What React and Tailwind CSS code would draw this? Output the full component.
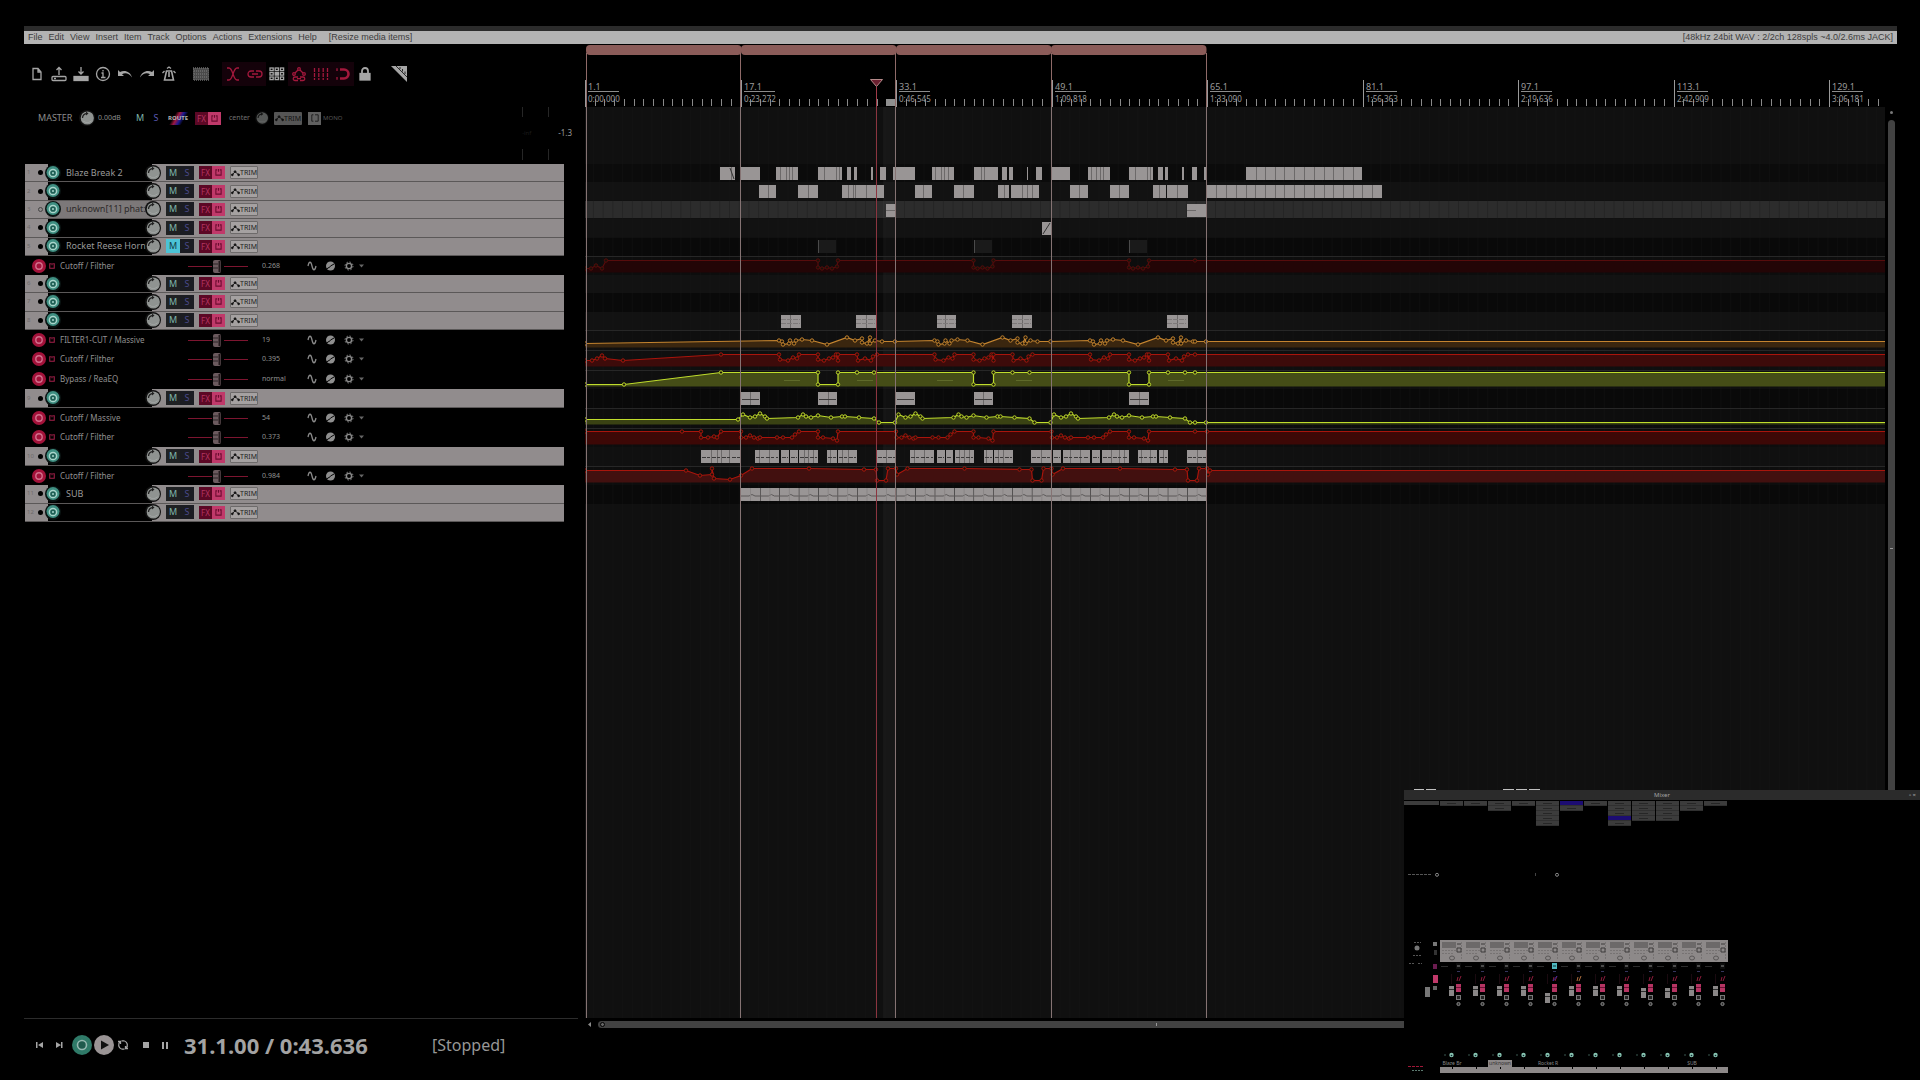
import React from 'react';

const SANS = "font-['Noto_Sans','Open_Sans',sans-serif]";

// Pixel position of bar 1 and the top of the lanes, 16 bars per section
const ORIGIN_X = 585;
const RULER_Y = 44;
const LANES_Y = 107;
const SECTION = 155.5;

const MENUS = ['File', 'Edit', 'View', 'Insert', 'Item', 'Track', 'Options', 'Actions', 'Extensions', 'Help'];

const MARKS = [
  ['1.1', '0:00,000'],
  ['17.1', '0:23,272'],
  ['33.1', '0:46,545'],
  ['49.1', '1:09,818'],
  ['65.1', '1:33,090'],
  ['81.1', '1:56,363'],
  ['97.1', '2:19,636'],
  ['113.1', '2:42,909'],
  ['129.1', '3:06,181'],
];

const GROUPS = [
  {
    height: 'h-[92px]',
    rows: [
      { name: 'Blaze Break 2' },
      { name: '' },
      { name: 'unknown[11] phat:', selected: true },
      { name: '' },
      { name: 'Rocket Reese Horn', muted: true },
    ],
  },
  { height: 'h-[19px]', rows: [{ env: 'Cutoff / Filther', value: '0.268' }] },
  { height: 'h-[55px]', rows: [{ name: '' }, { name: '' }, { name: '' }] },
  {
    height: 'h-[59px]',
    rows: [
      { env: 'FILTER1-CUT / Massive', value: '19' },
      { env: 'Cutoff / Filther', value: '0.395' },
      { env: 'Bypass / ReaEQ', value: 'normal' },
    ],
  },
  { height: 'h-[19px]', rows: [{ name: '' }] },
  {
    height: 'h-[39px]',
    rows: [
      { env: 'Cutoff / Massive', value: '54' },
      { env: 'Cutoff / Filther', value: '0.373' },
    ],
  },
  { height: 'h-[19px]', rows: [{ name: '' }] },
  { height: 'h-[19px]', rows: [{ env: 'Cutoff / Filther', value: '0.984' }] },
  { height: 'h-[37px]', rows: [{ name: 'SUB' }, { name: '' }] },
];

// Lane backgrounds: [top, bottom, colour]
const LANES = [
  [164, 182, '#0b0b0b'],
  [182, 200, '#121212'],
  [201, 218, '#2c2c2c'],
  [219, 237, '#121212'],
  [238, 256, '#090909'],
  [256, 275, '#0d0d0d'],
  [275, 293, '#121212'],
  [293, 312, '#090909'],
  [312, 330, '#121212'],
  [330, 389, '#0f0f0f'],
  [389, 408, '#090909'],
  [408, 447, '#0d0d0d'],
  [447, 466, '#101010'],
  [466, 485, '#0d0d0d'],
  [485, 504, '#090909'],
];

// Media items per lane: [start, end, inner splits]
const ITEMS = [
  {
    y: 167,
    clips: [
      [720, 735, [731]], [741, 760], [776, 798, [780, 786, 789, 792]], [818, 842, [824, 836, 839]],
      [847, 851], [854, 857], [871, 873], [880, 886], [893, 915],
      [932, 954, [935, 941, 944, 948]], [974, 998, [981, 984]], [1002, 1007], [1009, 1013], [1027, 1028],
      [1036, 1042], [1052, 1070], [1088, 1110, [1091, 1096, 1100, 1103]], [1129, 1153, [1135, 1147, 1150]], [1158, 1163],
      [1165, 1168], [1182, 1184], [1192, 1197], [1204, 1207],
      [1246, 1362, [1256, 1265, 1275, 1284, 1294, 1304, 1314, 1324, 1333, 1343, 1353]],
    ],
  },
  {
    y: 185,
    clips: [
      [759, 776, [768]], [798, 818, [808]], [842, 884, [848, 853, 855, 866]], [915, 932, [923]],
      [954, 974, [963]], [998, 1009, [1004]], [1011, 1039, [1022, 1027, 1032]], [1070, 1088, [1079]],
      [1110, 1129, [1119]], [1153, 1166, [1159]], [1167, 1188, [1177]],
      [1207, 1382, [1216, 1226, 1236, 1246, 1255, 1265, 1275, 1284, 1294, 1304, 1314, 1324, 1333, 1343, 1353, 1362, 1372]],
    ],
  },
  { y: 204, clips: [[886, 896], [1187, 1207]] },
  { y: 222, clips: [[1042, 1051]] },
  { y: 315, clips: [[781, 801, [790]], [856, 877, [866]], [937, 956, [945]], [1012, 1032, [1022]], [1167, 1188, [1177]]] },
  { y: 392, wave: true, clips: [[741, 760, [750]], [818, 837, [828]], [896, 915], [974, 993, [983]], [1129, 1149, [1139]]] },
  {
    y: 450,
    wave: true,
    clips: [
      [701, 741, [711, 717, 721, 729]], [755, 779, [759, 769]], [781, 789], [790, 798], [799, 818, [804, 808, 813]],
      [827, 837, [830]], [838, 857, [842, 848]], [877, 896, [886]], [910, 934, [914, 924]], [937, 945], [946, 953],
      [955, 974, [959, 964, 969]], [984, 993, [986]], [994, 1013, [998, 1003]], [1031, 1051, [1041]],
      [1053, 1061], [1063, 1090, [1070, 1080]], [1092, 1100], [1102, 1129, [1111, 1119, 1124]],
      [1138, 1157, [1141, 1150]], [1159, 1168, [1163]], [1187, 1207, [1197]],
    ],
  },
];

const repeat = (points, times, from = 0) =>
  Array.from({ length: times }).flatMap((_, i) => points.map(([x, y]) => [x + (i + from) * SECTION, y]));

const cutoffDip = (x) => [[x, 260], [x, 267], [x + 4, 268], [x + 9, 267], [x + 14, 268], [x + 19, 266], [x + 20, 260]];

const ENVELOPES = [
  {
    bottom: 272,
    line: '#570c0c',
    fill: '#230506',
    head: [[585, 268], [591, 268], [596, 265], [602, 268], [606, 260]],
    body: cutoffDip(818),
    end: 260,
  },
  {
    bottom: 347,
    line: '#c4842f',
    fill: '#3a260f',
    head: [[585, 343]],
    body: [
      [779, 340], [782, 341], [783, 344], [789, 343], [790, 340], [794, 343], [796, 340], [802, 339], [812, 340],
      [827, 344], [847, 337], [855, 340], [862, 338], [862, 342], [867, 343], [870, 337], [870, 343], [875, 340],
      [882, 341], [895, 341],
    ],
    end: 341,
  },
  {
    bottom: 366,
    line: '#a9150c',
    fill: '#3d0b0a',
    head: [[585, 360], [592, 360], [597, 358], [602, 355], [605, 358], [623, 360], [721, 354]],
    body: [
      [779, 354], [780, 359], [788, 360], [793, 357], [797, 358], [799, 354], [818, 354], [818, 359], [824, 360],
      [829, 358], [833, 357], [836, 354], [838, 360], [838, 354], [857, 354], [858, 360], [865, 358], [871, 360],
      [873, 356], [877, 354],
    ],
    end: 354,
  },
  {
    bottom: 386,
    line: '#bfdc2c',
    fill: '#454d17',
    head: [[585, 384], [624, 384], [721, 372]],
    body: [[818, 372], [818, 384], [838, 384], [838, 372], [857, 372], [874, 372]],
    end: 372,
  },
  {
    bottom: 424,
    line: '#bfdc2c',
    fill: '#3a4213',
    head: [[585, 419], [738, 419]],
    body: [
      [743, 414], [750, 417], [755, 416], [760, 413], [765, 416], [767, 418], [798, 417], [803, 414], [806, 416],
      [811, 417], [818, 415], [831, 417], [842, 416], [845, 416], [859, 417], [874, 418], [879, 422], [895, 422],
    ],
    end: 422,
  },
  {
    bottom: 444,
    line: '#a9150c',
    fill: '#3d0806',
    head: [[585, 431], [682, 431], [701, 431], [701, 437], [708, 437], [714, 436], [717, 437], [721, 431], [741, 431]],
    body: [
      [741, 437], [746, 437], [750, 435], [754, 437], [758, 438], [760, 437], [777, 437], [783, 437], [792, 437],
      [795, 434], [799, 431], [818, 431], [818, 437], [823, 437], [833, 438], [837, 440], [838, 431], [896, 431],
    ],
    end: 431,
  },
  {
    bottom: 482,
    line: '#a9150c',
    fill: '#42100f',
    head: [[585, 470], [686, 470], [700, 475], [712, 474], [712, 468], [714, 478], [730, 479], [741, 475]],
    body: [
      [752, 468], [809, 468], [864, 469], [876, 469], [877, 480], [886, 480], [888, 468], [896, 468], [897, 474],
    ],
    end: 470,
  },
];

const Region = ({ x }) => <rect x={x} y="45" width={SECTION} height="10" rx="4" fill="#8b5c59" />;

const Ruler = () => (
  <svg className={`block h-[63px] w-full shrink-0 ${SANS}`} role="img" aria-label="Ruler">
    <g transform={`translate(${-ORIGIN_X} ${-RULER_Y})`}>
      {[0, 1, 2, 3].map((i) => <Region key={i} x={586 + i * 155} />)}
      {Array.from({ length: 134 }).map((_, i) => (
        <rect key={i} x={Math.round(585 + i * (SECTION / 16))} y="99" width="1" height="7" fill="#8a8a8a" />
      ))}
      {MARKS.map(([bar, time], i) => {
        const x = Math.round(585 + i * SECTION);
        return (
          <g key={bar}>
            <rect x={x} y="80" width="1" height="27" fill="#9a9a9a" />
            <text x={x + 3} y="90" fontSize="9" fill="#9a9a9a">{bar}</text>
            <rect x={x + 3} y="91" width="31" height="1" fill="#8c8c8c" />
            <text x={x + 3} y="102" fontSize="8" fill="#9a9a9a">{time}</text>
          </g>
        );
      })}
      <rect x="886" y="99" width="9" height="7" fill="#8f8f8f" />
      {[586, 740, 895, 1051, 1206].map((x) => (
        <rect key={x} x={x} y="53" width="1" height="54" fill="#8f6a68" />
      ))}
      <path d="M870.500 79.500H882.500L876.500 86.500Z" fill="#6b2030" stroke="#b58a8a" />
      <rect x="876" y="87" width="1" height="20" fill="#a03a48" />
    </g>
  </svg>
);

const Clip = ({ x, end, y, splits = [], wave }) => (
  <g>
    <rect x={x} y={y} width={end - x} height="13" fill="#999595" />
    {splits.map((s) => <rect key={s} x={s} y={y} width="1" height="13" fill="#6c6969" />)}
    {wave && (
      <path
        d={`M${x + 1} ${y + 7.500}H${end - 1}`}
        stroke="#3a3838"
        strokeDasharray={y === 450 ? '4 1 3 2' : undefined}
      />
    )}
  </g>
);

const Envelope = ({ bottom, line, fill, head, body, end }) => {
  const points = [...head, ...repeat(body, 3), [1190 + (end === 470 ? 20 : 5), end]];
  const path = points.map(([x, y]) => `${x} ${y}`).join('L');
  return (
    <g transform="translate(0 0.500)">
      <path d={`M585 ${bottom}L${path}H3000V${bottom}Z`} fill={fill} />
      <path d={`M${path}H3000`} fill="none" stroke={line} strokeWidth="1.200" />
      {points.map(([x, y], i) => (
        <circle key={i} cx={x} cy={y} r="1.700" fill="#1a1208" stroke={line} />
      ))}
    </g>
  );
};

const Arrangement = () => (
  <svg className="block h-full w-full" role="img" aria-label="Arrangement">
    <defs>
      <pattern id="grid" width="9.720" height="4" patternUnits="userSpaceOnUse">
        <rect width="1" height="4" fill="#161616" />
      </pattern>
    </defs>
    <rect width="100%" height="100%" fill="#101010" />
    <g transform={`translate(${-ORIGIN_X} ${-LANES_Y})`}>
      {LANES.map(([top, bottom, fill]) => (
        <rect key={top} x="585" y={top} width="3000" height={bottom - top} fill={fill} />
      ))}
      <rect x="585" y="107" width="3000" height="1000" fill="url(#grid)" opacity="0.350" />
      <rect x="883" y="107" width="12" height="1000" fill="#ffffff" opacity="0.030" />
      {[256, 330, 350, 370, 408, 428, 466].map((y) => (
        <rect key={y} x="585" y={y} width="3000" height="1" fill="#272727" />
      ))}

      {ENVELOPES.map((e) => <Envelope key={e.bottom} {...e} />)}

      {ITEMS.map(({ y, wave, clips }) =>
        clips.map(([x, end, splits]) => <Clip key={`${y}-${x}`} x={x} end={end} y={y} splits={splits} wave={wave} />)
      )}
      <path d="M730 168L734 179M1043 234L1050 223" stroke="#333" />
      {[781, 856, 937, 1012, 1167].map((x) => (
        <path key={x} d={`M${x} 319.500h19M${x} 323.500h19`} stroke="#7d7979" strokeDasharray="5 1" />
      ))}
      {[784, 857, 937, 1016, 1168].map((x) => (
        <rect key={x} x={x} y="380" width="16" height="1" fill="#5f6a2a" />
      ))}
      {[886, 1187].map((x) => <path key={x} d={`M${x} 210.500h9`} stroke="#6c6969" />)}

      {/* Muted items */}
      {[818, 974, 1129].map((x) => (
        <g key={x}>
          <rect x={x} y="240" width="18" height="13" fill="#1a1a1a" />
          <rect x={x} y="240" width="1" height="13" fill="#4a4a4a" />
        </g>
      ))}

      {/* SUB */}
      {Array.from({ length: 24 }).map((_, i) => {
        const x = 741 + i * 19.420;
        return (
          <g key={i}>
            <rect x={x} y="488" width="19" height="13" fill="#999595" />
            <path d={`M${x} 496h8l3-1.500 3 1.500h5`} fill="none" stroke="#5c5959" />
            <rect x={x + 9} y="488" width="1" height="13" fill="#8a8686" />
          </g>
        );
      })}

      {[586, 740, 895, 1051, 1206].map((x) => (
        <rect key={x} x={x} y="107" width="1" height="1000" fill="#857373" />
      ))}
      <rect x="876" y="107" width="1" height="1000" fill="#8c3540" />
    </g>
  </svg>
);

const ToolButton = ({ label, active, children }) => (
  <button
    aria-label={label}
    className={`flex h-6 w-[22px] items-center justify-center ${active ? 'bg-[#14020a] text-[#a3183c]' : 'text-[#a5a5a5]'}`}
  >
    <svg viewBox="0 0 16 16" className="h-4 w-4" fill="none" stroke="currentColor" strokeWidth="1.300">
      {children}
    </svg>
  </button>
);

const Toolbar = () => (
  <div className="flex h-[60px] items-center pl-[2px]">
    <ToolButton label="New project"><path d="M4 2.500H9L12 6V13.500H4ZM9 2.500V6H12" /></ToolButton>
    <ToolButton label="Open project">
      <path d="M8 9V1.500M5.500 4L8 1.500L10.500 4" />
      <rect x="1" y="10.500" width="14" height="4" rx="1" />
      <path d="M3 12.500h2" />
    </ToolButton>
    <ToolButton label="Save project">
      <path d="M8 1V8M5.500 5.500L8 8L10.500 5.500" />
      <rect x="1" y="10.500" width="14" height="4" fill="currentColor" />
    </ToolButton>
    <ToolButton label="Project settings">
      <circle cx="8" cy="8" r="6.500" />
      <path d="M6.500 7H8V11.500M6 11.500H10.500M8 4V5.500" />
    </ToolButton>
    <ToolButton label="Undo">
      <path d="M1 4V10H7L5 8.200C8 6.500 12 7 15 11.500C13.500 5.500 7.500 3.500 3 6Z" fill="currentColor" stroke="none" />
    </ToolButton>
    <ToolButton label="Redo">
      <path d="M15 4V10H9L11 8.200C8 6.500 4 7 1 11.500C2.500 5.500 8.500 3.500 13 6Z" fill="currentColor" stroke="none" />
    </ToolButton>
    <ToolButton label="Metronome">
      <path d="M5.500 5H10.500L12.500 14H3.500ZM8 6V11" strokeWidth="1.600" />
      <path d="M6 2.500L8 1L10 2.500M1.500 7L3.500 5M14.500 7L12.500 5" />
    </ToolButton>
    <div className="w-[10px]" />
    <ToolButton label="Envelopes">
      <rect x="0" y="2" width="16" height="12" fill="#4a4a4a" stroke="#6a6a6a" strokeDasharray="1 1" />
      <path d="M1 5H15M1 8H15M1 11H15" stroke="#6f6f6f" strokeDasharray="1 1" />
    </ToolButton>
    <div className="w-[10px]" />
    <ToolButton label="Auto crossfade" active><path d="M2 2H4C8 2 8 14 12 14H14M14 2H12C8 2 8 14 4 14H2" /></ToolButton>
    <ToolButton label="Item grouping" active>
      <path d="M7 5H4A3 3 0 0 0 4 11H7M9 5H12A3 3 0 0 1 12 11H9M5 8H11" />
    </ToolButton>
    <ToolButton label="Ripple editing">
      {[2, 6.500, 11].map((y) =>
        [1, 6.200, 11.400].map((x) => <rect key={`${x}-${y}`} x={x} y={y} width="3.200" height="2.600" fill={x === 6.200 && y === 6.500 ? 'currentColor' : 'none'} />)
      )}
    </ToolButton>
    <ToolButton label="Envelope grouping" active>
      <circle cx="8" cy="3" r="1.300" /><circle cx="3" cy="8" r="1.300" /><circle cx="13" cy="8" r="1.300" />
      <path d="M7 4L4 7M9 4L12 7" />
      <path d="M7 11H4A1.700 1.700 0 0 0 4 14.500H7M9 11H12A1.700 1.700 0 0 1 12 14.500H9M6 12.700H10" />
    </ToolButton>
    <ToolButton label="Grid lines" active><path d="M1.500 2V14M5.800 2V14M10.200 2V14M14.500 2V14" strokeDasharray="4 1" /></ToolButton>
    <ToolButton label="Snap" active>
      <path d="M5 3.500H9A4.500 4.500 0 0 1 9 12.500H5" strokeWidth="2.600" />
      <path d="M2 2.300V5M2 11V13.700" />
    </ToolButton>
    <ToolButton label="Lock">
      <rect x="3" y="7.500" width="10" height="6.500" fill="currentColor" />
      <path d="M5 7V5A3 3 0 0 1 11 5V7" strokeWidth="1.800" />
    </ToolButton>
    <div className="w-3" />
    <ToolButton label="Ruler">
      <path d="M0 0H16V16Z" fill="currentColor" stroke="none" />
      <path d="M5 0L16 11M9 1V3M11.500 3V5.500M14 5.500V8" stroke="#1a1a1a" strokeWidth="0.900" />
    </ToolButton>
  </div>
);

const Knob = ({ size = 'h-4 w-4', label }) => (
  <button aria-label={label} className={`${size} shrink-0`}>
    <svg viewBox="0 0 16 16" className="h-full w-full">
      <circle cx="8" cy="8" r="8" fill="#111" />
      <circle cx="8.300" cy="8" r="6.600" fill="#8f9391" />
      <path d="M3 10A6 5 0 0 0 13.500 10A7 7 0 0 1 3 10Z" fill="#c6cac8" />
      <path d="M3.500 8A4.500 4.500 0 0 1 8 3.500" fill="none" stroke="#222" strokeWidth="1.300" />
      <path d="M7 1.500L9.500 3.500L7 5.500Z" fill="#222" />
    </svg>
  </button>
);

const FxButtons = () => (
  <div className="flex h-[13px] w-[26px] shrink-0 text-[8px] leading-[13px]">
    <button className="w-[13px] bg-[#5c0825] text-[#b43560]">FX</button>
    <button aria-label="Bypass FX" className="flex w-[13px] items-center justify-center bg-[#c0396a]">
      <svg viewBox="0 0 8 8" className="h-[7px] w-[7px]" fill="none" stroke="#6b0c30" strokeWidth="1.200">
        <path d="M2.500 1H1V7H7V1H5.500M4 0V3" />
      </svg>
    </button>
  </div>
);

const TrimButton = ({ master }) => (
  <button
    className={`flex h-[13px] w-7 shrink-0 items-center justify-center rounded-[1px] text-[7px] leading-[13px] ${
      master ? 'bg-[#555555] text-[#111111]' : 'border border-[#6d6a6a] bg-[#a5a1a1] text-[#222222]'
    }`}
  >
    <svg viewBox="0 0 10 8" className="h-2 w-[9px] shrink-0" fill="#111" stroke="#111">
      <path d="M1.500 6L4.500 2.500L8.500 6" fill="none" />
      <circle cx="1.500" cy="6" r="1" /><circle cx="4.500" cy="2.500" r="1" /><circle cx="8.500" cy="6" r="1" />
    </svg>
    TRIM
  </button>
);

const Master = () => (
  <div className="flex h-[60px] justify-between pl-[14px] pr-[6px]">
    <div className="flex h-7 items-center text-[8px] text-[#8c8c8c]">
      <span className="w-[41px] text-[9px]">MASTER</span>
      <Knob label="Master volume" />
      <span className="w-[37px] pl-[3px] text-[7px]">0.00dB</span>
      <button className="w-4 text-[9px] text-[#7fb5aa]">M</button>
      <button className="w-4 text-[9px] text-[#5a5ab5]">S</button>
      <button className="ml-[4px] w-5 bg-[linear-gradient(120deg,#000_30%,#a01840_45%,#1a1a90_60%,#000_75%)] text-[6px] font-bold leading-[13px] text-[#b5b5b5]">
        ROUTE
      </button>
      <div className="w-[7px]" />
      <FxButtons />
      <span className="w-[34px] pl-[8px] text-[7px] text-[#707070]">center</span>
      <div className="flex w-[19px] opacity-60"><Knob label="Master pan" size="h-[14px] w-[14px]" /></div>
      <TrimButton master />
      <button aria-label="Toggle mono" className="ml-[6px] flex h-[13px] w-[13px] items-center justify-center bg-[#606060]">
        <svg viewBox="0 0 10 10" className="h-2 w-2" fill="none" stroke="#111"><path d="M3 1H1V9H3M5 1H9V9H5" /></svg>
      </button>
      <span className="pl-[2px] text-[6px] text-[#555555]">MONO</span>
    </div>
    <div className="flex flex-col text-[8px] text-[#9a9a9a]">
      <div className="mt-[3px] flex h-[10px] gap-[25px]"><i className="w-px bg-[#262626]" /><i className="w-px bg-[#262626]" /></div>
      <div className="flex h-8 items-center gap-4">
        <span className="w-5 text-[6px] text-[#1c1c1c]">-inf</span>
        <span>-1.3</span>
      </div>
      <div className="flex h-[11px] gap-[25px]"><i className="w-px bg-[#262626]" /><i className="w-px bg-[#262626]" /></div>
    </div>
  </div>
);

const TrackRow = ({ name, number, selected, muted }) => (
  <div className="flex min-h-0 items-center border-b border-[#5b5858] bg-[#918c8d]">
    <div className="flex w-[23px] shrink-0 items-center justify-between pl-[2px] pr-[5px] text-[6px] text-[#6f6b6b]">
      {number}
      <i className={`h-[5px] w-[5px] rounded-full ${selected ? 'border border-[#444444]' : 'bg-black'}`} />
    </div>
    <div className={`flex h-full w-[104px] shrink-0 items-center ${selected ? 'bg-[#7c7879]' : 'bg-black'}`}>
      <button aria-label="Record arm" className="-ml-[3px] h-4 w-4 shrink-0">
        <svg viewBox="0 0 16 16" className="h-4 w-4">
          <circle cx="8" cy="8" r="8" fill="#0a1413" />
          <circle cx="8" cy="7.500" r="6.500" fill="#3f8f82" />
          <circle cx="8" cy="8" r="3.600" fill="#1f6056" stroke="#a9d6cc" strokeWidth="1.500" />
          <circle cx="8" cy="8" r="1" fill="#a9d6cc" />
        </svg>
      </button>
      <span className={`ml-[5px] whitespace-nowrap text-[9px] leading-[14px] ${selected ? 'text-[#2c2a2a]' : 'text-[#9a9a9a]'}`}>
        {name}
      </span>
    </div>
    <div className="z-10 -ml-[7px] flex"><Knob label="Volume" /></div>
    <div className="ml-[5px] flex h-[14px] w-7 shrink-0 text-[9px] leading-[14px]">
      <button className={`w-[14px] ${muted ? 'bg-[#4cc3d6] text-[#123c44]' : 'bg-[#1f2123] text-[#7fb5aa]'}`}>M</button>
      <button className="w-[14px] bg-[#1b1c22] text-[#4a4a8a]">S</button>
    </div>
    <div className="ml-[5px] flex"><FxButtons /></div>
    <div className="ml-[5px] flex"><TrimButton /></div>
  </div>
);

const EnvelopeRow = ({ env, value }) => (
  <div className="flex min-h-0 items-center pl-[7px] text-[#909090]">
    <button aria-label="Arm envelope" className="h-[14px] w-[14px] shrink-0">
      <svg viewBox="0 0 14 14" className="h-[14px] w-[14px]">
        <circle cx="7" cy="7" r="7" fill="#a3123a" />
        <circle cx="7" cy="7" r="3.200" fill="none" stroke="#d0708c" strokeWidth="1.400" />
      </svg>
    </button>
    <svg viewBox="0 0 8 8" className="ml-[3px] h-[6px] w-[6px]" fill="none" stroke="#a3204a" strokeWidth="1.400">
      <path d="M2.500 1H1V7H7V1H5.500M4 0V3" />
    </svg>
    <span className="w-[133px] shrink-0 whitespace-nowrap pl-[5px] text-[8px] leading-[14px]">{env}</span>
    <svg viewBox="0 0 60 16" className="h-4 w-[60px] shrink-0">
      <path d="M0 8.500H24M36 8.500H60" stroke="#7d1530" strokeWidth="1.200" />
      <rect x="25" y="2" width="8" height="13" rx="2" fill="#6b5a5e" />
      <path d="M25 6H30M25 10H30" stroke="#2c2426" />
      <path d="M31.500 3V14" stroke="#22181b" strokeWidth="2" />
    </svg>
    <span className="w-[52px] shrink-0 pl-[14px] text-[7px] leading-[14px]">{value}</span>
    <svg viewBox="0 0 60 12" className="ml-[6px] h-3 w-[60px] shrink-0" fill="none" stroke="#8a8a8a">
      <path d="M2 6C3 1 5 1 6 6S9 11 10 6" strokeWidth="1.300" />
      <circle cx="24.500" cy="6" r="4.500" fill="#8f8f8f" stroke="none" />
      <path d="M24.500 6L28 4M20.500 9L24.500 6.500" stroke="#000" />
      <circle cx="43" cy="6" r="2.600" strokeWidth="1.400" />
      <circle cx="43" cy="6" r="4" strokeDasharray="1.500 1.640" />
      <path d="M53 4.500H58L55.500 7.500Z" fill="#666" stroke="none" />
    </svg>
  </div>
);

const TrackPanel = () => {
  let number = 0;
  return (
    <div className="mr-[14px] ml-px flex flex-col">
      {GROUPS.map((group, i) => (
        <div key={i} className={`grid auto-rows-fr ${group.height}`}>
          {group.rows.map((row, j) =>
            row.env ? <EnvelopeRow key={j} {...row} /> : <TrackRow key={j} number={++number} {...row} />
          )}
        </div>
      ))}
    </div>
  );
};

const TransportButton = ({ label, width = 'w-[19px]', children }) => (
  <button aria-label={label} className={`flex items-center justify-center text-[#a5a5a5] ${width}`}>{children}</button>
);

const Transport = () => (
  <div className="flex h-[62px] items-start border-t border-[#2c2c2c] pl-[6px] pt-[15px]">
    <div className="flex h-[22px] items-center">
      <TransportButton label="Go to start">
        <svg viewBox="0 0 8 8" className="h-2 w-2" fill="currentColor"><path d="M0 1H1.500V7H0ZM7 1V7L2 4Z" /></svg>
      </TransportButton>
      <TransportButton label="Go to end">
        <svg viewBox="0 0 8 8" className="h-2 w-2" fill="currentColor"><path d="M6 1H7.500V7H6ZM1 1V7L6 4Z" /></svg>
      </TransportButton>
      <div className="w-[3px]" />
      <TransportButton label="Record" width="w-[22px]">
        <svg viewBox="0 0 20 20" className="h-5 w-5">
          <circle cx="10" cy="10" r="10" fill="#2f7a68" />
          <circle cx="10" cy="10" r="4.500" fill="#1f5a4d" stroke="#94b8b0" strokeWidth="1.600" />
        </svg>
      </TransportButton>
      <TransportButton label="Play" width="w-[22px]">
        <svg viewBox="0 0 20 20" className="h-5 w-5">
          <circle cx="10" cy="10" r="10" fill="#9a9495" />
          <path d="M7 5.500L15 10L7 14.500Z" fill="#111" />
        </svg>
      </TransportButton>
      <TransportButton label="Repeat" width="w-4">
        <svg viewBox="0 0 12 12" className="h-3 w-3" fill="none" stroke="currentColor" strokeWidth="1.300">
          <path d="M4.500 10A4.300 4.300 0 0 1 3 2.800M7.500 2A4.300 4.300 0 0 1 9 9.200" />
          <path d="M1 2.500H3.500V5M11 9.500H8.500V7" />
          <path d="M4.500 1.800H7.500M4.500 10.200H7.500" />
        </svg>
      </TransportButton>
      <div className="w-[5px]" />
      <TransportButton label="Stop"><i className="h-[6px] w-[6px] bg-[#a5a5a5]" /></TransportButton>
      <TransportButton label="Pause">
        <i className="mr-[2px] h-[7px] w-[2px] bg-[#a5a5a5]" />
        <i className="h-[7px] w-[2px] bg-[#a5a5a5]" />
      </TransportButton>
    </div>
    <div className="flex h-[22px] w-[258px] items-center pl-[10px] text-[22px] font-bold text-[#a3a3a3]">31.1.00 / 0:43.636</div>
    <div className="flex h-[22px] items-center text-base text-[#979797]">[Stopped]</div>
  </div>
);

// Insert slots per mixer strip, 'b' is a bypassed slot
const STRIPS = [
  { fx: 'a', label: 'Blaze Br' },
  { fx: 'a' },
  { fx: 'aa', label: 'unknown', selected: true },
  { fx: 'a' },
  { fx: 'aaaaa', label: 'Rocket R', muted: true },
  { fx: 'ba' },
  { fx: 'a' },
  { fx: 'aaaba' },
  { fx: 'aaaa' },
  { fx: 'aaaa' },
  { fx: 'aa', label: 'SUB' },
  { fx: 'a' },
];

const Slots = ({ fx }) => (
  <div className="h-[139px]">
    {fx.split('').map((slot, i) => (
      <div key={i} className={`mr-px flex h-[5px] items-center border-b border-[#303030] px-[7px] ${slot === 'b' ? 'bg-[#1c0c72]' : 'bg-[#3c3c3c]'}`}>
        {slot === 'a' && <i className="h-px w-full bg-[#262626]" />}
      </div>
    ))}
  </div>
);

const Strip = ({ fx, label, selected, muted, index }) => {
  const fader = muted ? 53 : index === 8 || index === 9 ? 48 : 46;
  return (
    <div className="flex w-6 flex-col">
      <Slots fx={fx} />
      <svg viewBox="0 0 24 120" className="block h-[120px] w-6">
        <rect width="24" height="22" fill="#8d8989" />
        <rect x="2" y="2" width="14" height="6" fill="#6c6969" />
        <path d="M2 10.500H16M2 13.500H14M21.500 2V20" stroke="#777373" strokeDasharray="2 1" />
        <path d="M17 4H21M17 8H21V12H17V8" fill="none" stroke="#3c3a3a" />
        <ellipse cx="12" cy="18" rx="2.500" ry="2" fill="none" stroke="#5a5757" />
        <rect x="16" y="23" width="5" height="6" fill={muted ? '#4fb7bf' : '#0c0c0c'} />
        <rect x="17" y="25.500" width="3" height="1" fill={muted ? '#0c3034' : '#8a8a8a'} />
        <rect x="17" y="31" width="3" height="1" fill="#35355c" />
        <rect x="1" y="26" width="7" height="1" fill="#2c2c2c" />
        <path d="M17 41L18 37M19 41L21 36" stroke={index === 5 ? '#b07040' : '#8c1c3c'} />
        {index === 4 && <path d="M17 41L21 36" stroke="#2c2ca0" />}
        <rect x="16" y="44" width="5" height="8" fill="#b53462" />
        <path d="M16 47.500H21" stroke="#6b1034" />
        <rect x="16.500" y="55.500" width="4" height="4" fill="#222" stroke="#777" />
        <circle cx="18.500" cy="64" r="1.600" fill="#333" stroke="#888" />
        <rect x="9" y={fader} width="5" height="10" fill="#8a8787" />
        <path d={`M9 ${fader + 3.500}H14`} stroke="#2c2c2c" />
        <path d="M11.500 34V44" stroke="#1a0a10" />
        <circle cx="11.500" cy="115" r="2.200" fill="#86c4b0" />
        <circle cx="11.500" cy="115.500" r="0.800" fill="#123" />
        <rect x="4" y="114" width="2" height="2" fill="#1d2c28" />
      </svg>
      <div className={`h-[7px] whitespace-nowrap text-center text-[5px] leading-[7px] ${selected ? 'bg-[#8d8989] text-[#333333]' : 'text-[#8a8a8a]'}`}>
        {label}
      </div>
      <div className="flex h-[6px] justify-center bg-[#8d8989]"><i className="h-[2px] w-px bg-black" /></div>
    </div>
  );
};

const Mixer = () => (
  <section aria-label="Mixer" className="absolute right-0 bottom-0 w-[516px] bg-black">
    <header className="flex h-[10px] items-center bg-[#2b2b2b] text-[6px] leading-[10px] text-[#a5a5a5]">
      <span className="flex-1 text-center">Mixer</span>
      <span className="absolute right-1">▫ ×</span>
    </header>
    <div className="absolute -top-px flex gap-[2px] pl-[10px]">
      <i className="h-px w-[10px] bg-[#c0c0c0]" />
      <i className="mr-[65px] h-px w-[10px] bg-[#c0c0c0]" />
      <i className="h-px w-[11px] bg-[#c0c0c0]" />
      <i className="h-px w-[11px] bg-[#c0c0c0]" />
      <i className="h-px w-[11px] bg-[#c0c0c0]" />
    </div>
    <div className="flex h-[280px] pt-px">
      <div className="w-9">
        <div className="h-[72px]"><div className="mr-px h-[4px] bg-[#3c3c3c]" /></div>
        <svg viewBox="0 0 36 200" className="block h-[200px] w-9 overflow-visible">
          <path d="M4 1.500H28" stroke="#555" strokeDasharray="3 1" />
          <circle cx="33" cy="1.800" r="1.500" fill="none" stroke="#888" />
          <path d="M131.500 0V3" stroke="#444" />
          <circle cx="153" cy="1.800" r="1.500" fill="none" stroke="#888" />
          <circle cx="13" cy="75" r="2.500" fill="#777" />
          <path d="M10 69.500H17M9 82.500H18M5 90.500H11M14 90.500H18" stroke="#555" strokeDasharray="2 1" />
          <rect x="29" y="69" width="4" height="4" fill="#777" />
          <rect x="30" y="77" width="3" height="5" fill="#333" />
          <rect x="29" y="91" width="4" height="5" fill="#6b1c50" />
          <rect x="29" y="102" width="5" height="8" fill="#c0396a" />
          <rect x="29" y="113" width="4" height="4" fill="#666" />
          <rect x="21" y="114" width="5" height="10" fill="#777" />
          <path d="M4 193.500H20" stroke="#a01838" strokeDasharray="3 1" />
          <path d="M8 197.500H20" stroke="#5c7a70" strokeDasharray="2 1" />
        </svg>
      </div>
      {STRIPS.map((strip, i) => <Strip key={i} index={i} {...strip} />)}
    </div>
  </section>
);

const App = () => (
  <div className={`relative flex h-screen flex-col overflow-hidden bg-black pt-[26px] pr-[23px] pl-6 ${SANS}`}>
    <div className="h-[5px] shrink-0 bg-[#2b2b2b]" />
    <nav className="flex h-[13px] shrink-0 items-center gap-[6px] bg-[#b3b3b3] px-1 font-['Liberation_Sans',sans-serif] text-[9px] leading-[13px] text-[#3c3c3c]">
      {MENUS.map((menu) => <button key={menu}>{menu}</button>)}
      <span className="ml-[6px]">[Resize media items]</span>
      <span className="ml-auto">[48kHz 24bit WAV : 2/2ch 128spls ~4.0/2.6ms JACK]</span>
    </nav>

    <div className="flex min-h-0 flex-1">
      <aside className="flex w-[554px] shrink-0 flex-col">
        <Toolbar />
        <Master />
        <TrackPanel />
        <div className="flex-1" />
        <Transport />
      </aside>

      <main className="ml-[7px] flex min-w-0 flex-1 flex-col pb-[52px]">
        <Ruler />
        <div className="flex min-h-0 flex-1">
          <div className="min-w-0 flex-1"><Arrangement /></div>
          <div className="flex w-3 flex-col items-center pt-1">
            <i className="h-[3px] w-[3px] rounded-full bg-[#777777]" />
            <div className="mt-[6px] flex w-[7px] flex-1 flex-col items-center rounded-full bg-[#424242] pt-[428px]">
              <i className="h-px w-[3px] bg-[#999999]" />
            </div>
          </div>
        </div>
        <div className="flex h-[10px] items-end gap-[6px] pl-[3px]">
          <svg viewBox="0 0 4 7" className="h-[7px] w-1"><path d="M3 1V6L0 3.500Z" fill="#8a8a8a" /></svg>
          <div className="flex h-[7px] flex-1 items-center rounded-full bg-[#424242] pl-[2px]">
            <i className="h-[5px] w-[5px] rounded-full border border-black bg-[#666666]" />
            <i className="ml-[551px] h-[3px] w-px bg-[#999999]" />
          </div>
        </div>
      </main>
    </div>

    <Mixer />
  </div>
);

export default App;
